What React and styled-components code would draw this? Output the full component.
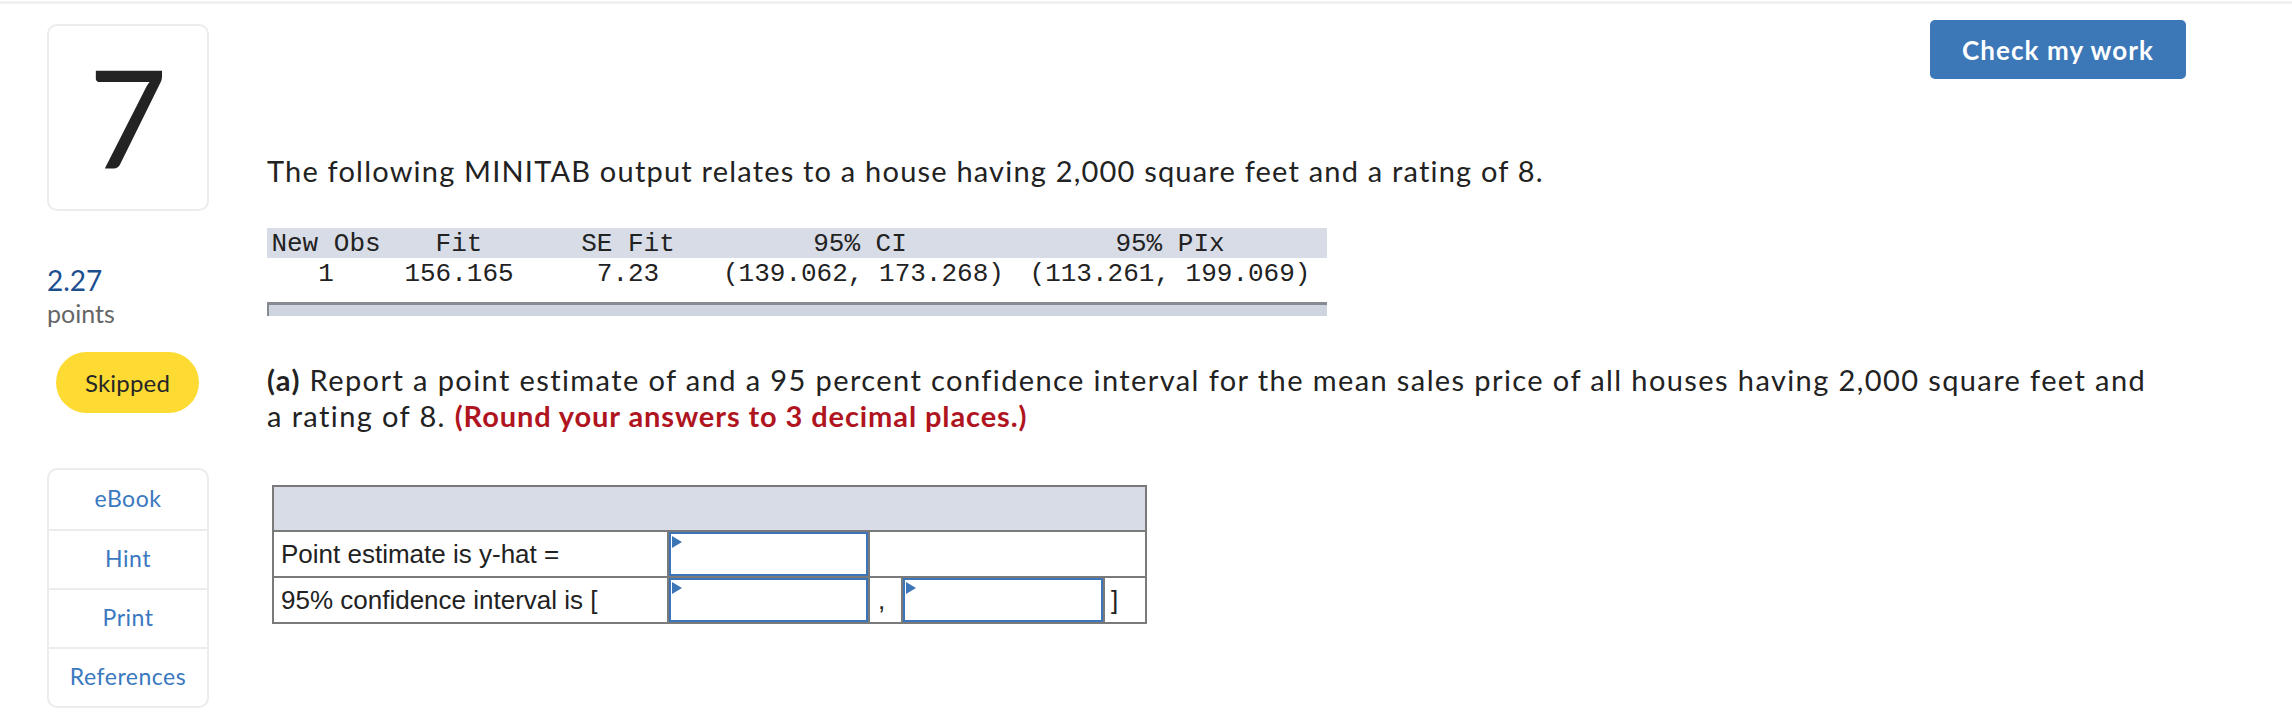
import React from "react";
import styled, { createGlobalStyle } from "styled-components";

const GlobalStyle = createGlobalStyle`
  html, body {
    margin: 0;
    padding: 0;
    background: #ffffff;
  }
  body {
    font-family: Lato, "Open Sans", sans-serif;
    color: #222222;
  }
  * {
    box-sizing: border-box;
  }
`;

const minitab = {
  head: ["New Obs", "Fit", "SE Fit", "95% CI", "95% PIx"],
  row: ["1", "156.165", "7.23", "(139.062, 173.268)", "(113.261, 199.069)"],
};

const tools = ["eBook", "Hint", "Print", "References"];

const App = () => {
  return (
    <>
      <GlobalStyle />
      <Page>
        <Sidebar>
          <NumberCard>7</NumberCard>
          <Score>2.27</Score>
          <ScoreLabel>points</ScoreLabel>
          <StatusPill>Skipped</StatusPill>
          <ToolList>
            {tools.map((t) => (
              <ToolItem key={t}>{t}</ToolItem>
            ))}
          </ToolList>
        </Sidebar>

        <Main>
          <TopBar>
            <CheckButton>Check my work</CheckButton>
          </TopBar>

          <Prompt>
            The following MINITAB output relates to a house having 2,000 square
            feet and a rating of 8.
          </Prompt>

          <Output>
            <OutputRow $head>
              {minitab.head.map((h, i) => (
                <OutputCell key={h} $last={i === 4}>
                  {h}
                </OutputCell>
              ))}
            </OutputRow>
            <OutputRow>
              {minitab.row.map((v, i) => (
                <OutputCell key={i} $last={i === 4}>
                  {v}
                </OutputCell>
              ))}
            </OutputRow>
            <OutputFoot />
          </Output>

          <Part>
            <b>(a)</b> Report a point estimate of and a 95 percent confidence
            interval for the mean sales price of all houses having 2,000 square
            feet and
            <br />
            a rating of 8. <Hint>(Round your answers to 3 decimal places.)</Hint>
          </Part>

          <AnswerGrid>
            <AnswerHead />
            <LabelCell>Point estimate is y-hat =</LabelCell>
            <InputCell>
              <AnswerInput />
            </InputCell>
            <BlankCell />
            <LabelCell>95% confidence interval is [</LabelCell>
            <InputCell>
              <AnswerInput />
            </InputCell>
            <MarkCell>,</MarkCell>
            <InputCell>
              <AnswerInput />
            </InputCell>
            <MarkCell $bracket>]</MarkCell>
          </AnswerGrid>
        </Main>
      </Page>
    </>
  );
};

const AnswerInput = () => (
  <InputBox>
    <Flag />
  </InputBox>
);

const Page = styled.div`
  margin-top: 1px;
  border-top: 3px solid #f1f1f1;
  display: grid;
  grid-template-columns: 162px 1fr;
  column-gap: 58px;
  padding: 0 106px 0 47px;
  min-height: 716px;
`;

const Sidebar = styled.div`
  display: flex;
  flex-direction: column;
  padding-top: 20px;
`;

const NumberCard = styled.div`
  height: 187px;
  border: 2px solid #ececec;
  border-radius: 10px;
  display: flex;
  align-items: center;
  justify-content: center;
  font-size: 136px;
  line-height: 1;
  color: #232323;
  padding-bottom: 4px;
`;

const Score = styled.div`
  margin-top: 53px;
  font-size: 28px;
  line-height: 32px;
  color: #1d4f8f;
`;

const ScoreLabel = styled.div`
  margin-top: 2px;
  font-size: 25px;
  line-height: 30px;
  color: #666666;
`;

const StatusPill = styled.div`
  margin: 24px 0 0 9px;
  width: 143px;
  height: 61px;
  border-radius: 31px;
  background: #fddb32;
  display: flex;
  align-items: center;
  justify-content: center;
  font-size: 24px;
  letter-spacing: 0.2px;
  color: #262626;
`;

const ToolList = styled.div`
  margin-top: 55px;
  border: 2px solid #ececec;
  border-radius: 10px;
  display: flex;
  flex-direction: column;
`;

const ToolItem = styled.div`
  height: 59px;
  display: flex;
  align-items: center;
  justify-content: center;
  padding-bottom: 3px;
  font-size: 23px;
  letter-spacing: 0.5px;
  color: #3a78bf;
  & + & {
    border-top: 2px solid #ececec;
  }
`;

const Main = styled.div`
  display: flex;
  flex-direction: column;
  align-items: flex-start;
  padding-top: 16px;
`;

const TopBar = styled.div`
  align-self: stretch;
  display: flex;
  justify-content: flex-end;
`;

const CheckButton = styled.button`
  width: 256px;
  height: 59px;
  border: none;
  border-radius: 5px;
  background: #3c77b7;
  color: #ffffff;
  font-family: Lato, sans-serif;
  font-weight: 700;
  font-size: 26px;
  letter-spacing: 1.1px;
  cursor: pointer;
`;

const Prompt = styled.p`
  margin: 74px 0 0;
  font-size: 29px;
  line-height: 36px;
  letter-spacing: 1.2px;
  color: #222222;
`;

const Output = styled.div`
  margin-top: 39px;
  width: 1060px;
  font-family: "Liberation Mono", "Courier New", monospace;
  font-size: 26px;
  color: #222222;
`;

const OutputRow = styled.div`
  display: grid;
  grid-template-columns: 118px 148px 190px 274px 330px;
  height: ${(p) => (p.$head ? "30px" : "32px")};
  line-height: 32px;
  background: ${(p) => (p.$head ? "#d8dce6" : "transparent")};
  white-space: pre;
`;

const OutputCell = styled.div`
  text-align: center;
  padding-left: ${(p) => (p.$last ? "16px" : "0")};
`;

const OutputFoot = styled.div`
  margin-top: 12px;
  height: 14px;
  background: #ced4e0;
  border-top: 3px solid #86898f;
  border-left: 2px solid #86898f;
`;

const Part = styled.p`
  margin: 46px 0 0;
  font-size: 29px;
  line-height: 36px;
  letter-spacing: 1.4px;
  color: #222222;
  b {
    font-weight: 700;
  }
`;

const Hint = styled.span`
  color: #b0151f;
  font-weight: 700;
  letter-spacing: 0.9px;
`;

const AnswerGrid = styled.div`
  margin: 51px 0 0 5px;
  display: grid;
  grid-template-columns: 393px 199px 31px 200px 40px;
  grid-template-rows: 43px 44px 44px;
  gap: 2px;
  padding: 2px;
  background: #7a7a7a;
  font-family: "Liberation Sans", Arial, sans-serif;
  font-size: 26px;
  letter-spacing: 0;
  color: #222222;
`;

const AnswerHead = styled.div`
  grid-column: 1 / -1;
  background: #d8dce6;
`;

const LabelCell = styled.div`
  background: #ffffff;
  padding-left: 7px;
  line-height: 44px;
  white-space: nowrap;
`;

const BlankCell = styled.div`
  grid-column: span 3;
  background: #ffffff;
`;

const InputCell = styled.div`
  background: #ffffff;
  display: flex;
`;

const InputBox = styled.div`
  position: relative;
  flex: 1;
  border: 2px solid #3d76b8;
  background: #ffffff;
`;

const Flag = styled.span`
  position: absolute;
  top: 2px;
  left: 1px;
  width: 0;
  height: 0;
  border-left: 10px solid #3d76b8;
  border-top: 6px solid transparent;
  border-bottom: 6px solid transparent;
`;

const MarkCell = styled.div`
  background: #ffffff;
  padding-left: ${(p) => (p.$bracket ? "6px" : "8px")};
  line-height: 44px;
`;

export default App;
